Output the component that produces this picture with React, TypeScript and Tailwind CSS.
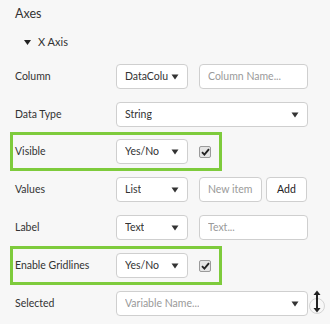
import { ReactNode } from "react";

const Caret = () => (
  <svg width="8" height="6" viewBox="0 0 8 6" className="shrink-0">
    <path d="M0.5 0.5 L7.5 0.5 L4 5.5 Z" fill="#333" />
  </svg>
);

const Select = ({ value, placeholder, wide }: { value?: string; placeholder?: string; wide?: boolean }) => (
  <div
    className={`flex items-center justify-between h-[25px] bg-white border border-[#cfcfcf] rounded-[4px] pl-[8px] pr-[8px] ${
      wide ? "w-[192px]" : "w-[72px]"
    }`}
  >
    <span className={`whitespace-nowrap overflow-hidden ${value ? "text-[#333]" : "text-[#999]"}`}>{value ?? placeholder}</span>
    <Caret />
  </div>
);

const Input = ({ placeholder, w }: { placeholder: string; w: string }) => (
  <div className={`flex items-center h-[25px] bg-white border border-[#cfcfcf] rounded-[4px] pl-[8px] text-[#9a9a9a] ${w}`}>
    <span className="whitespace-nowrap overflow-hidden">{placeholder}</span>
  </div>
);

const Check = () => (
  <div className="ml-[11px] w-[12px] h-[12px] rounded-[2px] border border-[#9a9a9a] bg-[#e4e4e4] flex items-center justify-center">
    <svg width="9" height="8" viewBox="0 0 9 8">
      <path d="M1 4.2 L3.4 6.6 L8 1.2" stroke="#222" strokeWidth="1.9" fill="none" />
    </svg>
  </div>
);

const Row = ({ label, children, className = "" }: { label: string; children: ReactNode; className?: string }) => (
  <div className={`flex items-center h-[25px] ${className}`}>
    <div className="w-[101px] shrink-0 text-[#333]">{label}</div>
    <div className="flex items-center">{children}</div>
  </div>
);

const Highlight = ({ children, className = "" }: { children: ReactNode; className?: string }) => (
  <div className={`-ml-[5px] w-[212px] border-[3px] border-[#7ecb3c] pl-[2px] py-[4px] ${className}`}>{children}</div>
);

export default function App() {
  return (
    <div
      className="w-[330px] h-[324px] bg-[#f7f7f7] overflow-hidden px-[15px] text-[10.5px]"
      style={{ fontFamily: 'Lato, "Liberation Sans", sans-serif' }}
    >
      <div className="pt-[5px] h-[24px] text-[12.5px] text-[#333] leading-[18px]">Axes</div>
      <div className="mt-[9px] flex items-center h-[18px] pl-[9px] text-[11px] text-[#333]">
        <svg width="7" height="5" viewBox="0 0 7 5" className="mr-[7px]">
          <path d="M0 0 L7 0 L3.5 5 Z" fill="#222" />
        </svg>
        X Axis
      </div>
      <Row label="Column" className="mt-[13px]">
        <Select value="DataColu" />
        <div className="ml-[11px]">
          <Input placeholder="Column Name..." w="w-[109px]" />
        </div>
      </Row>
      <Row label="Data Type" className="mt-[13px]">
        <Select value="String" wide />
      </Row>
      <Highlight className="mt-[5px]">
        <Row label="Visible">
          <Select value="Yes/No" />
          <Check />
        </Row>
      </Highlight>
      <Row label="Values" className="mt-[6px]">
        <Select value="List" />
        <div className="ml-[11px]">
          <Input placeholder="New item" w="w-[63px]" />
        </div>
        <div className="ml-[4px] h-[25px] w-[41px] bg-white border border-[#cfcfcf] rounded-[4px] flex items-center justify-center text-[#222]">
          Add
        </div>
      </Row>
      <Row label="Label" className="mt-[13px]">
        <Select value="Text" />
        <div className="ml-[11px]">
          <Input placeholder="Text..." w="w-[109px]" />
        </div>
      </Row>
      <Highlight className="mt-[6px]">
        <Row label="Enable Gridlines">
          <Select value="Yes/No" />
          <Check />
        </Row>
      </Highlight>
      <Row label="Selected" className="mt-[6px]">
        <Select placeholder="Variable Name..." wide />
        <svg width="16" height="32" viewBox="0 0 16 32" className="ml-[1px] -mt-[2px]">
          <circle cx="8" cy="19" r="7.5" stroke="#d4d4d4" strokeWidth="1" fill="none" />
          <path d="M8 5 V24" stroke="#222" strokeWidth="2" />
          <path d="M4.5 8 L8 3.5 L11.5 8 Z" fill="#222" />
          <path d="M4.5 21 L8 25.5 L11.5 21 Z" fill="#222" />
        </svg>
      </Row>
    </div>
  );
}
